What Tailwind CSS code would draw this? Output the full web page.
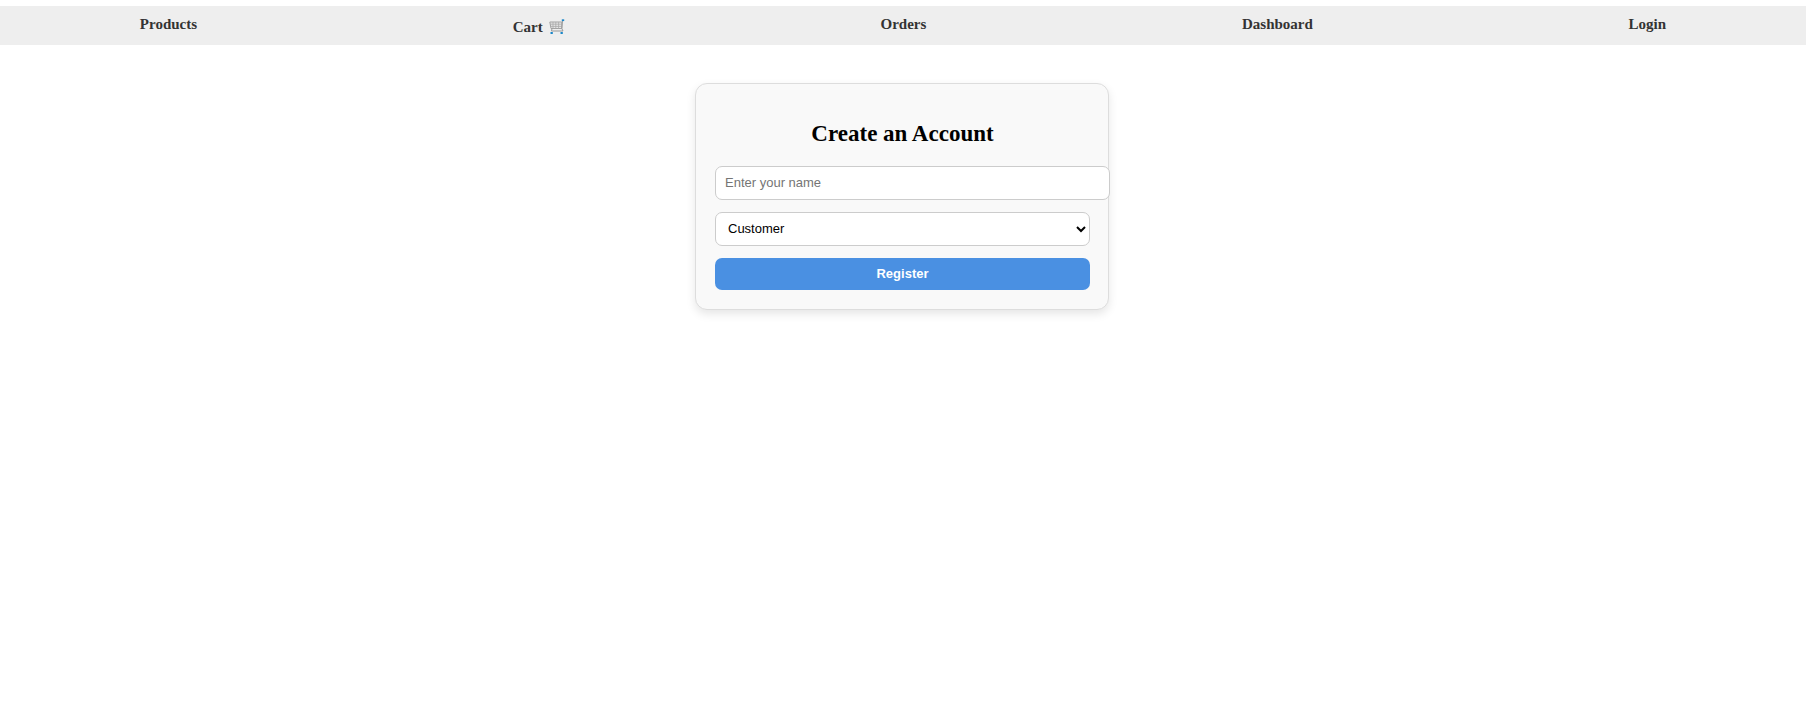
<!DOCTYPE html>
<html lang="en">
<head>
<meta charset="utf-8">
<meta name="viewport" content="width=device-width, initial-scale=1">
<title>Create an Account</title>
<script src="https://cdn.jsdelivr.net/npm/@tailwindcss/browser@4"></script>
</head>
<body class="flow-root min-h-screen bg-white font-['Liberation_Serif',serif]">
<nav class="mt-1.5 bg-[#eee] pt-[9px] pb-[9px]">
  <ul class="flex items-start justify-around gap-9 text-[15px] leading-[18px] font-bold text-[#333]">
    <li><a href="#products">Products</a></li>
    <li class="pt-[3px]"><a href="#cart" class="flex items-center gap-1.5">Cart
      <svg class="h-4 w-4" viewBox="0 0 16 16" fill="none" aria-hidden="true">
        <path d="M.8 3H12.8V9.5H2Z" fill="#e6e6e6" stroke="#a3a3a3"/>
        <path d="M4 3V9.5M6.8 3V9.5M9.6 3V9.5M1 5.2H12.8M1.5 7.4H12.8" stroke="#aaa" stroke-width=".8"/>
        <path d="M13.5 1.5L12.8 9.5L14 12H2.5L3 9.5" stroke="#999" stroke-width="1"/>
        <path d="M12.8 1.2H15.2" stroke="#1b87c9" stroke-width="1.8"/>
        <path d="M1.5 14H3.8M11.5 14H13.8" stroke="#1b87c9" stroke-width="1.8"/>
      </svg></a></li>
    <li><a href="#orders">Orders</a></li>
    <li><a href="#dashboard">Dashboard</a></li>
    <li><a href="#login">Login</a></li>
  </ul>
</nav>
<main class="pt-[38px] pr-0.5">
  <form class="mx-auto flex w-full max-w-[414px] flex-col gap-3 rounded-xl border border-[#ddd] bg-[#f9f9f9] pt-9 pr-[18px] pb-[19px] pl-[19px] shadow-[0_4px_10px_rgba(0,0,0,0.1)]">
    <h2 class="mb-1.5 text-center text-[23px] leading-7 font-bold text-black">Create an Account</h2>
    <input type="text" aria-label="Name" placeholder="Enter your name" class="-mr-5 h-[34px] rounded-[7px] border border-[#ccc] bg-white px-[9px] pb-0.5 font-['Liberation_Sans',sans-serif] text-[13px] placeholder:text-[#757575]">
    <select aria-label="Role" class="h-[34px] rounded-[7px] border border-[#ccc] bg-white pr-1 pb-0.5 pl-2 font-['Liberation_Sans',sans-serif] text-[13px] text-black">
      <option>Customer</option>
    </select>
    <button type="submit" class="h-8 rounded-[7px] bg-[#4a90e2] font-['Liberation_Sans',sans-serif] text-[13px] font-bold text-white">Register</button>
  </form>
</main>
</body>
</html>
